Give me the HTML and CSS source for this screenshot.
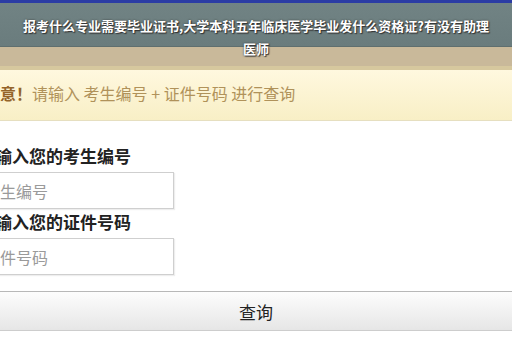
FILE: index.html
```html
<!DOCTYPE html>
<html lang="zh-CN">
<head>
    <meta charset="UTF-8">
    <meta name="viewport" content="width=device-width, initial-scale=1.0">
    <title>成绩查询</title>
    <link rel="stylesheet" href="styles.css">
</head>
<body>
    <!-- Header bands -->
    <header class="topbar">
        <div class="topbar-blue"></div>
        <div class="topbar-gray"></div>
        <div class="topbar-tan"></div>
        <h1 class="caption">报考什么专业需要毕业证书,大学本科五年临床医学毕业发什么资格证?有没有助理医师</h1>
    </header>

    <!-- Notice -->
    <div class="notice">
        <p><strong>注意！</strong>请输入 考生编号 + 证件号码 进行查询</p>
    </div>

    <!-- Query form -->
    <form class="query">
        <div class="fields">
            <label for="examNo">请输入您的考生编号</label>
            <input type="text" id="examNo" placeholder="考生编号">
            <label for="idNo">请输入您的证件号码</label>
            <input type="text" id="idNo" placeholder="证件号码">
        </div>
        <button type="submit" class="query-btn">查询</button>
    </form>
</body>
</html>
```

FILE: styles.css
```css
:root {
    --blue: #2b3ca4;
    --gray-band: #6d7f80;
    --tan-band: #c9b99a;
    --notice-text: #b0925a;
    --notice-strong: #94642a;
    --text-color: #222;
}

body {
    margin: 0;
    padding: 0;
    background-color: #fff;
    color: var(--text-color);
    font-family: "Noto Sans CJK SC", "Noto Sans", sans-serif;
    overflow: hidden;
}

/* Header */
.topbar {
    position: relative;
}

.topbar-blue {
    height: 3px;
    background-color: var(--blue);
}

.topbar-gray {
    height: 43px;
    background: linear-gradient(#718384, #6a7c7d);
    border-bottom: 1px solid #5f6f6f;
}

.topbar-tan {
    height: 19px;
    background-color: var(--tan-band);
    border-bottom: 4px solid #d6c89e;
}

.caption {
    position: absolute;
    top: 14px;
    left: 0;
    right: 0;
    margin: 0;
    padding: 0 20px;
    text-align: center;
    font-size: 13px;
    line-height: 23px;
    font-weight: bold;
    color: #fff;
    text-shadow: 0 0 2px #333, 1px 1px 1px #333;
}

/* Notice */
.notice {
    height: 50px;
    background: linear-gradient(#fff8df, #f8efc6);
    border-bottom: 1px solid #e6dfc0;
    margin-bottom: 22px;
}

.notice p {
    margin: 0 0 0 -16px;
    font-size: 16px;
    line-height: 46px;
    color: var(--notice-text);
    white-space: nowrap;
}

.notice strong {
    color: var(--notice-strong);
}

/* Form */
.fields {
    display: flex;
    flex-direction: column;
    align-items: flex-start;
    margin-left: -22px;
}

.fields label {
    font-size: 17px;
    font-weight: bold;
    line-height: 26px;
    color: #222;
}

.fields input {
    box-sizing: border-box;
    width: 196px;
    height: 37px;
    margin-top: 3px;
    padding: 0 0 0 5px;
    border: 1px solid #cfcfcf;
    box-shadow: 1px 1px 1px #eee;
    font-family: inherit;
    font-size: 16px;
}

.fields input::placeholder {
    color: #9a9a9a;
}

.query-btn {
    display: block;
    width: 100%;
    height: 40px;
    margin-top: 16px;
    border: none;
    border-top: 1px solid #b8b8b8;
    border-bottom: 1px solid #cdcdcd;
    background: linear-gradient(#fdfdfd, #e6e6e6);
    font-family: inherit;
    font-size: 17px;
    color: #222;
}
```
